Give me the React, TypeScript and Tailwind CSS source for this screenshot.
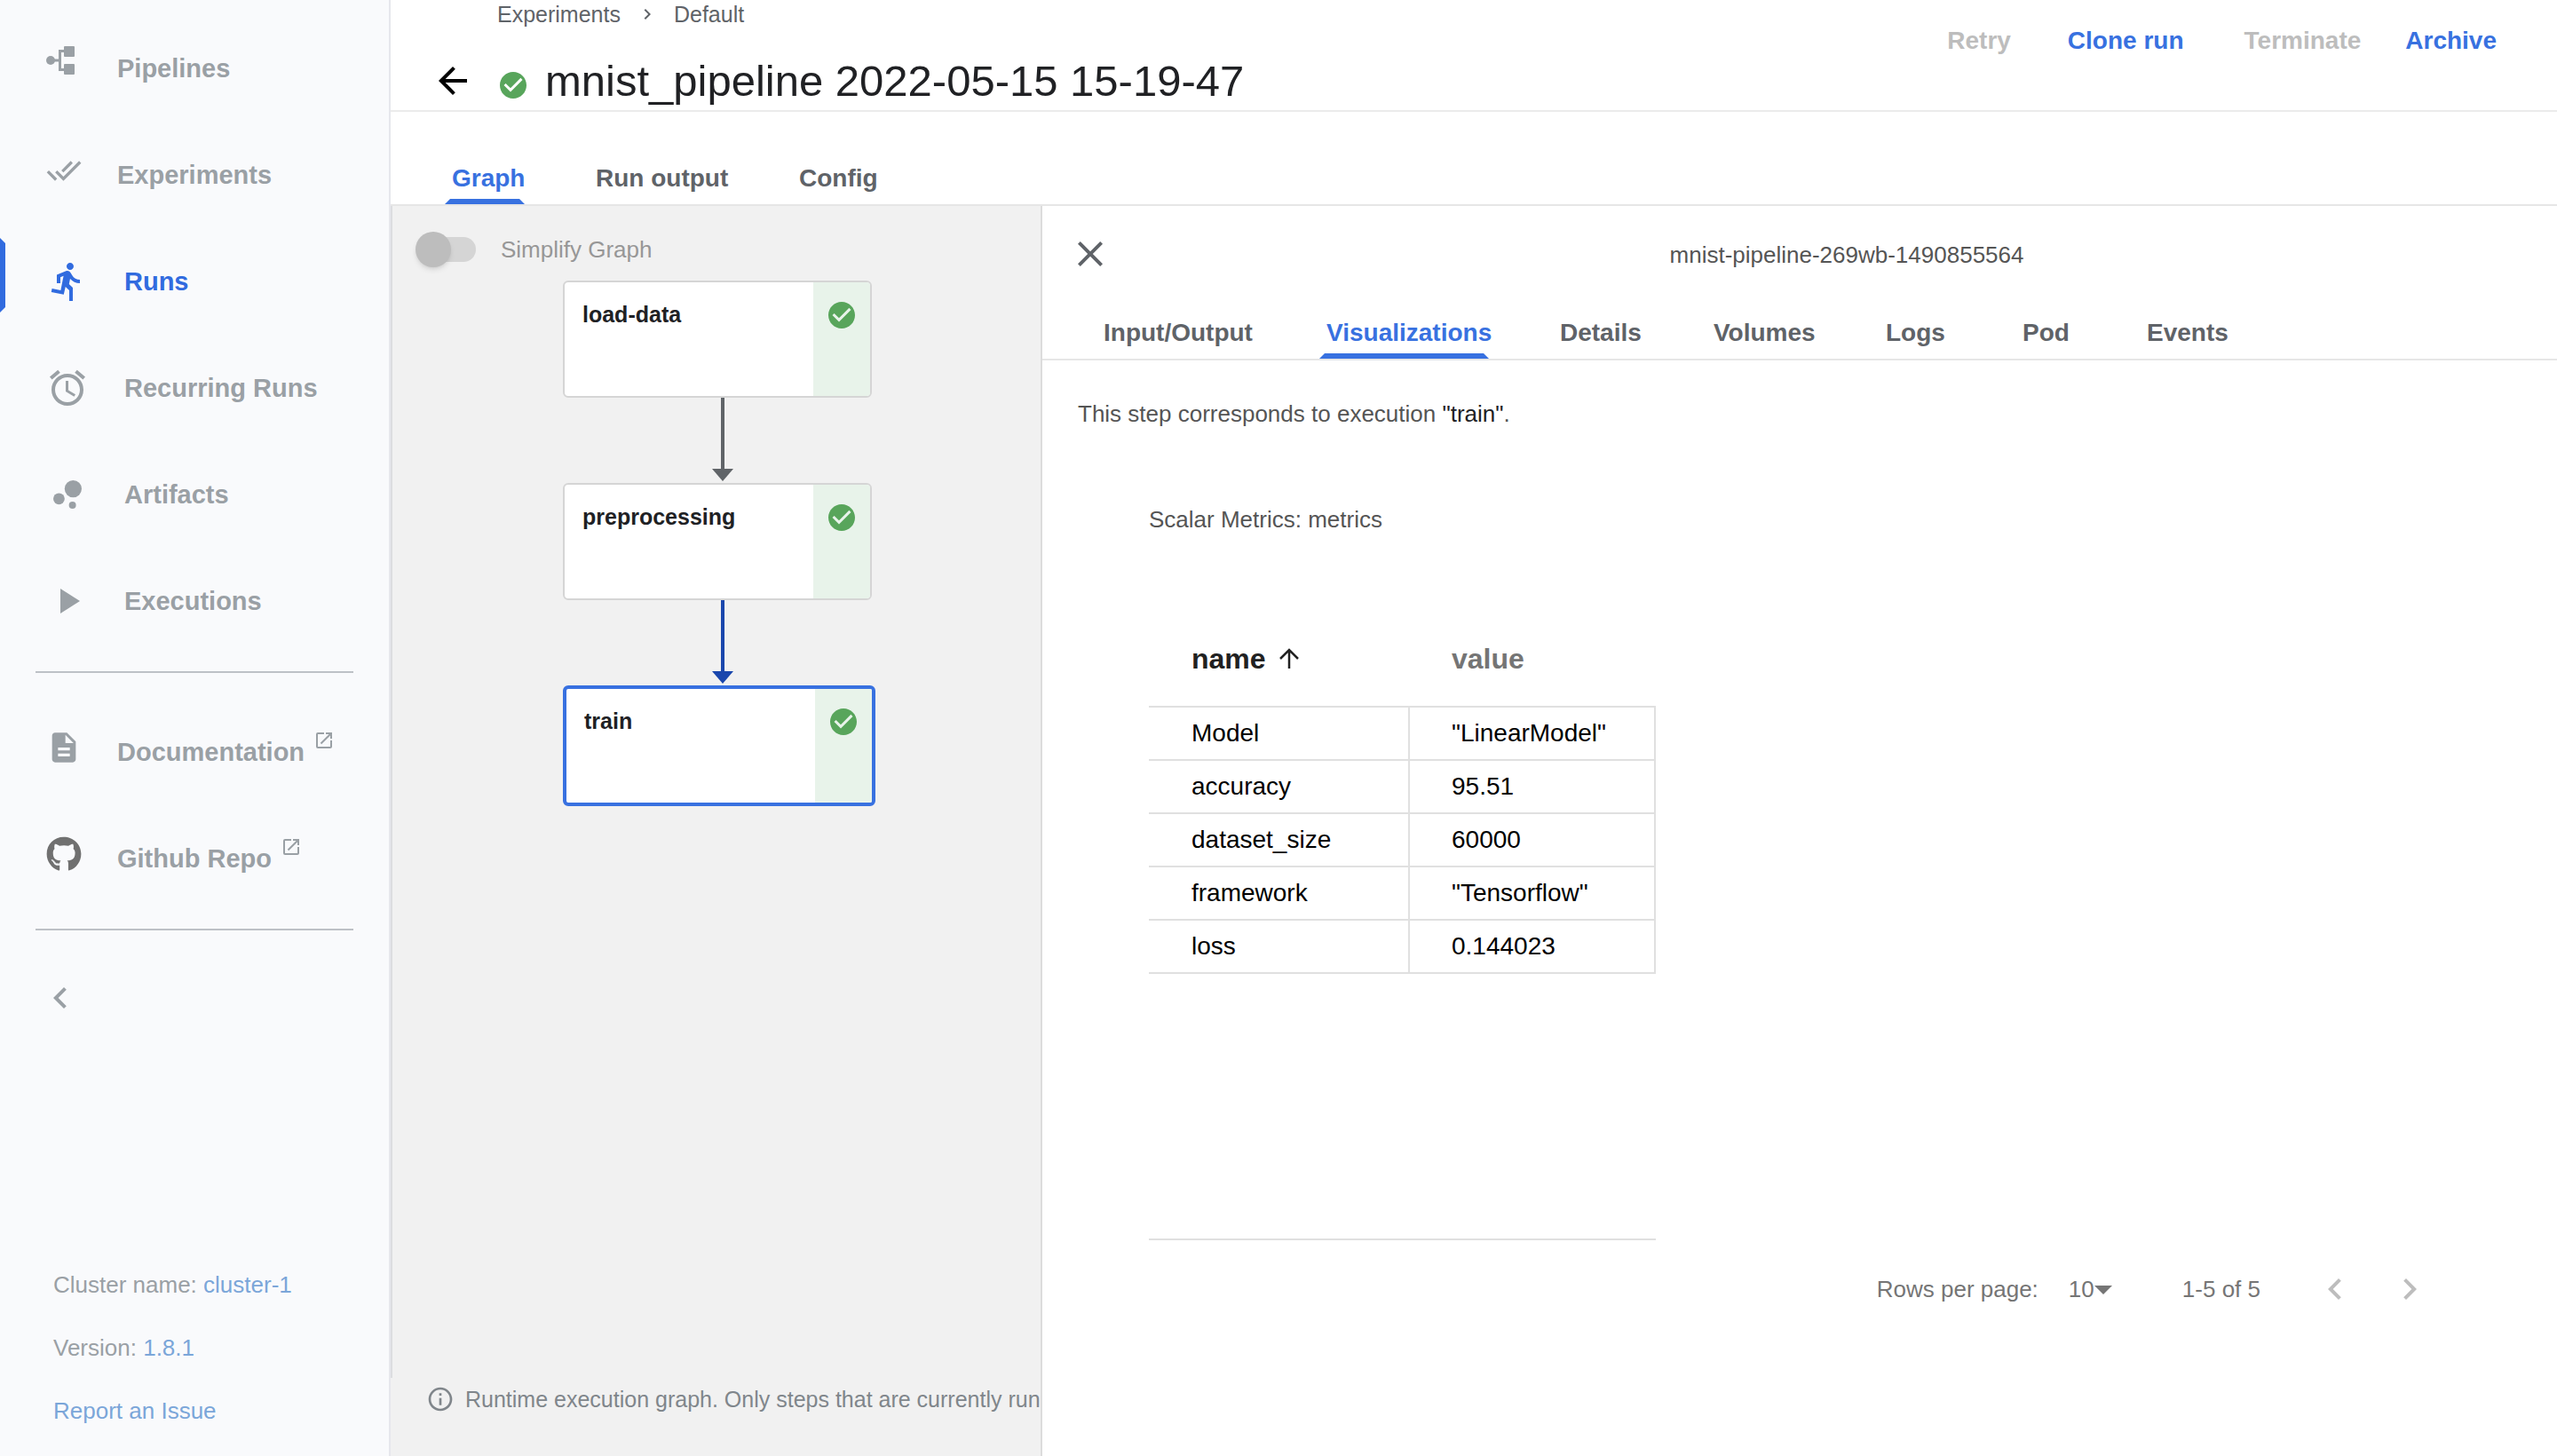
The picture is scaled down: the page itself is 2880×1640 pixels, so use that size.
import React from "react";
import {
  MdAccessAlarm,
  MdArrowBack,
  MdArrowDropDown,
  MdBubbleChart,
  MdCheckCircle,
  MdChevronLeft,
  MdChevronRight,
  MdClose,
  MdDescription,
  MdDirectionsRun,
  MdDoneAll,
  MdInfoOutline,
  MdOpenInNew,
  MdPlayArrow,
} from "react-icons/md";
import { FaGithub } from "react-icons/fa";

const PipelinesIcon = () => (
  <svg viewBox="0 0 40 40" className="size-10" fill="currentColor" aria-hidden="true">
    <circle cx="5" cy="16" r="5" />
    <rect x="20" y="0" width="12" height="12" rx="1" />
    <rect x="20" y="20" width="12" height="12" rx="1" />
    <path d="M8 16h8M21 5.5h-5.5v21H21" fill="none" stroke="currentColor" strokeWidth="3" />
  </svg>
);

const SmallIcon = ({ children }: { children: React.ReactNode }) => (
  <span className="block pb-[10px]">{children}</span>
);

const navItems = [
  { label: "Pipelines", icon: <SmallIcon><PipelinesIcon /></SmallIcon> },
  { label: "Experiments", icon: <SmallIcon><MdDoneAll className="size-10" /></SmallIcon> },
  { label: "Runs", icon: <MdDirectionsRun className="size-12" />, active: true },
  { label: "Recurring Runs", icon: <MdAccessAlarm className="size-12" /> },
  { label: "Artifacts", icon: <MdBubbleChart className="size-12" /> },
  { label: "Executions", icon: <MdPlayArrow className="size-12" /> },
];

const externalItems = [
  { label: "Documentation", icon: <MdDescription className="size-10" /> },
  { label: "Github Repo", icon: <FaGithub className="size-10 text-[#707070]" /> },
];

function Sidebar() {
  return (
    <aside className="flex w-[440px] shrink-0 flex-col border-r-2 border-[#e6e7ec] bg-[#f9fafc] text-[#9aa0a5]">
      <nav className="flex flex-col pt-[17px] text-[29px] font-bold">
        {navItems.map((item) => (
          <a
            key={item.label}
            href="#"
            aria-current={item.active ? "page" : undefined}
            className={
              item.active
                ? "relative flex h-[120px] items-center gap-10 pl-[52px] text-[#316bdf]"
                : "relative flex h-[120px] items-center gap-10 pl-[52px]"
            }
          >
            {item.active && (
              <span className="absolute top-[11px] left-0 h-[84px] w-[6px] bg-[#316bdf] [clip-path:polygon(0_0,100%_6px,100%_78px,0_100%)]" />
            )}
            {item.icon}
            <span className="pt-0.5">{item.label}</span>
          </a>
        ))}
        <hr className="mx-10 mt-[19px] mb-[29px] border-t-2 border-[#bdc1c6]" />
        {externalItems.map((item) => (
          <a key={item.label} href="#" className="flex h-[120px] items-center gap-10 pl-[52px]">
            <SmallIcon>{item.icon}</SmallIcon>
            <span className="flex items-center gap-[10px] pt-0.5">
              {item.label}
              <span className="block pb-7">
                <MdOpenInNew className="size-6" />
              </span>
            </span>
          </a>
        ))}
        <hr className="mx-10 mt-[19px] mb-[52px] border-t-2 border-[#bdc1c6]" />
      </nav>
      <button type="button" aria-label="Collapse menu" className="ml-11 size-12">
        <MdChevronLeft className="size-12" />
      </button>
      <div className="mt-auto pb-[15px] pl-[60px] text-[26px] leading-[71px]">
        <p>
          Cluster name: <a href="#" className="text-[#7ba6d9]">cluster-1</a>
        </p>
        <p>
          Version: <a href="#" className="text-[#7ba6d9]">1.8.1</a>
        </p>
        <p>
          <a href="#" className="text-[#7ba6d9]">Report an Issue</a>
        </p>
      </div>
    </aside>
  );
}

function Header() {
  return (
    <header className="flex justify-between border-b-2 border-[#ebebeb]">
      <div className="pb-[5px] pl-[46px]">
        <nav aria-label="Breadcrumb" className="flex items-center pl-[74px] text-[25px] leading-8 text-[#5f6368]">
          <a href="#">Experiments</a>
          <MdChevronRight className="mx-[18px] size-6" />
          <span>Default</span>
        </nav>
        <div className="mt-[31px] flex items-center">
          <button type="button" aria-label="Back" className="size-12 text-black">
            <MdArrowBack className="size-12" />
          </button>
          <span className="ml-[26px] block pt-[10px]">
            <MdCheckCircle className="size-9 text-[#58a55b]" />
          </span>
          <h1 className="ml-[18px] text-[49px] leading-[56px] text-[#202124]">mnist_pipeline 2022-05-15 15-19-47</h1>
        </div>
      </div>
      <div className="flex items-start pt-[30px] pr-[68px] text-[28px] leading-8 font-bold text-[#3871e0]">
        <button type="button" disabled className="mr-[64px] text-[#bdbdbd]">Retry</button>
        <button type="button" className="mr-[68px]">Clone run</button>
        <button type="button" disabled className="mr-[50px] text-[#bdbdbd]">Terminate</button>
        <button type="button">Archive</button>
      </div>
    </header>
  );
}

type Tab = { label: string; width: string; active?: boolean };

const runTabs: Tab[] = [
  { label: "Graph", width: "w-[82px]", active: true },
  { label: "Run output", width: "w-[149px]" },
  { label: "Config", width: "w-[89px]" },
];

const stepTabs: Tab[] = [
  { label: "Input/Output", width: "w-[171px]" },
  { label: "Visualizations", width: "w-[183px]", active: true },
  { label: "Details", width: "w-[93px]" },
  { label: "Volumes", width: "w-[114px]" },
  { label: "Logs", width: "w-[74px]" },
  { label: "Pod", width: "w-[60px]" },
  { label: "Events", width: "w-[92px]" },
];

function Tabs({ tabs, label }: { tabs: Tab[]; label: string }) {
  return (
    <div role="tablist" aria-label={label} className="flex gap-20 border-b-2 border-[#e6e6e6] pl-[69px] text-[28px] leading-8 font-bold text-[#5f6368]">
      {tabs.map((tab) => (
        <button
          key={tab.label}
          type="button"
          role="tab"
          aria-selected={!!tab.active}
          className={`relative pt-px pb-[13px] text-left whitespace-nowrap ${tab.width} ${tab.active ? "text-[#3871e0]" : ""}`}
        >
          {tab.label}
          {tab.active && (
            <span className="absolute right-0 bottom-0 -left-2 h-[6px] bg-[#3871e0] [clip-path:polygon(6px_0,calc(100%-6px)_0,100%_100%,0_100%)]" />
          )}
        </button>
      ))}
    </div>
  );
}

function Node({ name, selected }: { name: string; selected?: boolean }) {
  return (
    <button
      type="button"
      className={
        selected
          ? "w-fit overflow-hidden rounded-md border-4 border-[#3871e0] bg-white"
          : "w-fit overflow-hidden rounded-md border-2 border-[#d5d5d5] bg-white"
      }
    >
      <span className="flex h-32 w-[344px] text-left">
        <span className="flex-1 pt-[22px] pl-5 text-[25px] leading-7 font-bold text-[#202124]">{name}</span>
        <span className="flex w-16 justify-center bg-[#e8f3ea] pt-[19px]">
          <MdCheckCircle className="size-9 text-[#58a55b]" />
        </span>
      </span>
    </button>
  );
}

function Edge({ color }: { color: string }) {
  return (
    <svg viewBox="0 0 24 96" className={`ml-[168px] h-24 w-6 ${color}`} fill="currentColor" aria-hidden="true">
      <rect x="10" y="0" width="4" height="82" />
      <path d="M0 80h24L12 94z" />
    </svg>
  );
}

function GraphPane() {
  return (
    <section className="flex w-[30%] shrink-0 flex-col bg-[#f1f1f1]">
      <div className="flex flex-1 flex-col border-l-2 border-[#dcdde0] pt-7">
        <label className="ml-[26px] flex w-fit items-center gap-7 text-[26px] leading-10 text-[#979797]">
          <input type="checkbox" role="switch" className="sr-only" />
          <span className="relative flex h-10 w-[68px] items-center justify-end">
            <span className="h-7 w-14 rounded-full bg-[#d5d5d5]" />
            <span className="absolute top-0 left-0 size-10 rounded-full bg-[#bdbdbd] shadow-md" />
          </span>
          <span className="pt-px">Simplify Graph</span>
        </label>
        <div className="mt-[15px] ml-48 flex flex-col">
          <Node name="load-data" />
          <Edge color="text-[#606468]" />
          <Node name="preprocessing" />
          <Edge color="text-[#1a47ad]" />
          <Node name="train" selected />
        </div>
      </div>
      <div className="flex h-[88px] items-start overflow-hidden pt-2 pl-10 text-[25px] leading-8 whitespace-nowrap text-[#80868b]">
        <MdInfoOutline className="mr-3 size-8 shrink-0" />
        <p>Runtime execution graph. Only steps that are currently running</p>
      </div>
    </section>
  );
}

const metrics = [
  ["Model", '"LinearModel"'],
  ["accuracy", "95.51"],
  ["dataset_size", "60000"],
  ["framework", '"Tensorflow"'],
  ["loss", "0.144023"],
];

function MetricsTable() {
  return (
    <div className="w-[571px] border-b-2 border-[#e0e0e0] pb-[298px]">
      <table className="w-full table-fixed border-separate border-spacing-0 text-left text-[28px] text-black">
        <thead>
          <tr className="text-[32px] text-[#757575]">
            <th className="h-[108px] w-[294px] border-b-2 border-[#e0e0e0] pl-12" aria-sort="ascending">
              <button type="button" className="flex items-center gap-[14px] text-[#212121]">
                name
                <svg viewBox="0 0 24 24" className="size-6" fill="none" stroke="currentColor" strokeWidth="2.5" aria-hidden="true">
                  <path d="M12 23V2M2 12 12 2l10 10" />
                </svg>
              </button>
            </th>
            <th className="border-b-2 border-[#e0e0e0] pl-[47px]">value</th>
          </tr>
        </thead>
        <tbody>
          {metrics.map(([name, value]) => (
            <tr key={name}>
              <td className="h-[60px] border-r-2 border-b-2 border-[#e0e0e0] pl-12">{name}</td>
              <td className="border-r-2 border-b-2 border-[#e0e0e0] pl-[47px]">{value}</td>
            </tr>
          ))}
        </tbody>
      </table>
    </div>
  );
}

function Pagination() {
  return (
    <div className="mt-[31px] flex h-12 items-center justify-end pr-[142px] text-[26px] text-[#757575]">
      <label htmlFor="rows-per-page">Rows per page:</label>
      <span className="relative ml-[34px] flex w-[63px] items-center">
        <select id="rows-per-page" className="w-full appearance-none bg-transparent">
          <option>10</option>
          <option>20</option>
          <option>50</option>
        </select>
        <MdArrowDropDown className="pointer-events-none absolute right-0 size-12" />
      </span>
      <span className="ml-[65px]">1-5 of 5</span>
      <button type="button" aria-label="Previous page" disabled className="ml-[60px] size-12 text-[#bdbdbd]">
        <MdChevronLeft className="size-12" />
      </button>
      <button type="button" aria-label="Next page" disabled className="ml-9 size-12 text-[#bdbdbd]">
        <MdChevronRight className="size-12" />
      </button>
    </div>
  );
}

function StepPane() {
  return (
    <section className="min-w-0 flex-1 border-l-2 border-[#dcdcdc] bg-white">
      <div className="flex items-center pt-[30px] pb-12 pl-[30px]">
        <button type="button" aria-label="Close" className="size-12 text-[#5f6368]">
          <MdClose className="size-12" />
        </button>
        <h2 className="flex-1 pt-0.5 pl-7 text-center text-[26px] leading-8 text-[#555]">mnist-pipeline-269wb-1490855564</h2>
      </div>
      <Tabs tabs={stepTabs} label="Step details" />
      <div className="pt-11 text-[26px] leading-8 text-[#555]">
        <p className="pl-10">
          This step corresponds to execution <a href="#" className="text-[#202124]">"train"</a>.
        </p>
        <div className="mt-[87px] pl-[120px]">
          <h3 className="mb-[88px]">Scalar Metrics: metrics</h3>
          <MetricsTable />
        </div>
      </div>
      <Pagination />
    </section>
  );
}

export default function App() {
  return (
    <div className="flex min-h-screen bg-white font-['Liberation_Sans',Arial,sans-serif]">
      <Sidebar />
      <main className="flex min-w-0 flex-1 flex-col">
        <Header />
        <div className="pt-[58px]">
          <Tabs tabs={runTabs} label="Run" />
        </div>
        <div className="flex flex-1">
          <GraphPane />
          <StepPane />
        </div>
      </main>
    </div>
  );
}
